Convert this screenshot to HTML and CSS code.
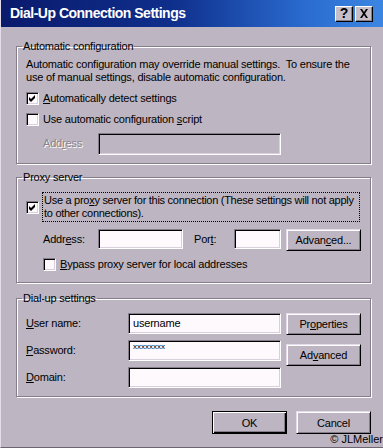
FILE: index.html
```html
<!DOCTYPE html>
<html lang="en">
<head>
  <meta charset="UTF-8">
  <title>Dial-Up Connection Settings</title>
  <link rel="stylesheet" href="styles.css">
</head>
<body>
  <div class="window">
    <div class="titlebar">
      <span class="title">Dial-Up Connection Settings</span>
      <div class="caption-buttons">
        <span class="cap-btn help">?</span>
        <span class="cap-btn close">
          <svg width="10" height="9" viewBox="0 0 10 9"><path d="M1 0 L3 0 L5 3 L7 0 L9 0 L6 4.5 L9 9 L7 9 L5 6 L3 9 L1 9 L4 4.5 Z" fill="#000"/></svg>
        </span>
      </div>
    </div>

    <div class="content">
      <fieldset class="group group-auto">
        <legend>Automatic configuration</legend>
        <p class="note">Automatic configuration may override manual settings.&nbsp; To ensure the<br>use of manual settings, disable automatic configuration.</p>
        <div class="check-row">
          <span class="box"><svg width="9" height="9" viewBox="0 0 9 9"><path d="M1 3 L3 5 L7 1 L7 4 L3 8 L1 6 Z" fill="#000"/></svg></span>
          <span><u>A</u>utomatically detect settings</span>
        </div>
        <div class="check-row">
          <span class="box"></span>
          <span>Use automatic configuration <u>s</u>cript</span>
        </div>
        <div class="field-row indent">
          <span class="label disabled label-addr">Add<u>r</u>ess</span>
          <span class="input input-disabled wide"></span>
        </div>
      </fieldset>

      <fieldset class="group group-proxy">
        <legend>Proxy server</legend>
        <div class="check-row proxy-row">
          <span class="box"><svg width="9" height="9" viewBox="0 0 9 9"><path d="M1 3 L3 5 L7 1 L7 4 L3 8 L1 6 Z" fill="#000"/></svg></span>
          <span class="focus">Use a pro<u>x</u>y server for this connection (These settings will not apply<br>to other connections).</span>
        </div>
        <div class="field-row indent">
          <span class="label label-addr">Addr<u>e</u>ss:</span>
          <span class="input addr"></span>
          <span class="label label-port">Por<u>t</u>:</span>
          <span class="input port"></span>
          <button class="btn">Advan<u>c</u>ed...</button>
        </div>
        <div class="check-row indent bypass">
          <span class="box"></span>
          <span><u>B</u>ypass proxy server for local addresses</span>
        </div>
      </fieldset>

      <fieldset class="group group-dial">
        <legend>Dial-up settings</legend>
        <div class="dial">
          <div class="dial-fields">
            <span class="label"><u>U</u>ser name:</span>
            <span class="input">username</span>
            <span class="label"><u>P</u>assword:</span>
            <span class="input pass">xxxxxxxx</span>
            <span class="label"><u>D</u>omain:</span>
            <span class="input"></span>
          </div>
          <div class="dial-buttons">
            <button class="btn">Pr<u>o</u>perties</button>
            <button class="btn">Ad<u>v</u>anced</button>
          </div>
        </div>
      </fieldset>

      <div class="footer">
        <button class="btn default">OK</button>
        <button class="btn">Cancel</button>
      </div>
    </div>
    <span class="credit">© JLMeller</span>
  </div>
</body>
</html>
```

FILE: styles.css
```css
body {
  margin: 0;
  padding: 0;
  background: #bdb5c1;
  font-family: "Liberation Sans", Arial, sans-serif;
  font-size: 11px;
  line-height: 13px;
  letter-spacing: -0.2px;
  color: #000;
}

.window {
  position: relative;
  width: 383px;
  height: 448px;
  box-sizing: border-box;
  overflow: hidden;
  background: #bdb5c1;
  border-left: 1px solid #e4dce8;
  border-bottom: 1px solid #6c6470;
}

.titlebar {
  height: 27px;
  display: flex;
  align-items: center;
  justify-content: space-between;
  padding: 0 10px 0 9px;
  background: linear-gradient(90deg, #0a1a6c 0%, #0f2f8c 45%, #2a6cd0 80%, #3c86e2 100%);
}

.title {
  color: #fff;
  font-weight: bold;
  font-size: 14px;
  letter-spacing: -0.5px;
}

.caption-buttons {
  display: flex;
  gap: 2px;
}

.cap-btn {
  width: 18px;
  height: 16px;
  box-sizing: border-box;
  display: flex;
  align-items: center;
  justify-content: center;
  background: #c6bec9;
  border: 1px solid;
  border-color: #fff #000 #000 #fff;
  box-shadow: inset -1px -1px 0 #857d89;
  font-weight: bold;
  font-size: 14px;
  letter-spacing: 0;
}

.content {
  padding: 13px 12px 0 15px;
}

.group {
  margin: 0;
  padding: 5px 8px 8px 9px;
  border: 1px solid #857d89;
  box-shadow: 1px 1px 0 #fff, inset 1px 1px 0 #fff;
  min-width: 0;
}

.group legend {
  padding: 0 1px;
  margin-left: -4px;
  line-height: 13px;
}

.group-proxy {
  margin-top: 7px;
  padding-top: 8px;
  padding-bottom: 11px;
}

.group-dial {
  margin-top: 9px;
  padding-top: 8px;
  padding-bottom: 8px;
}

.note {
  margin: 0;
  white-space: nowrap;
}

.check-row {
  display: flex;
  align-items: center;
  gap: 4px;
  margin-top: 8px;
  white-space: nowrap;
}

.box {
  width: 13px;
  height: 13px;
  box-sizing: border-box;
  flex: none;
  display: flex;
  align-items: center;
  justify-content: center;
  background: #fdf9fd;
  border: 1px solid;
  border-color: #857d89 #fff #fff #857d89;
  box-shadow: inset 1px 1px 0 #000, inset -1px -1px 0 #d8d0dc;
}

.proxy-row {
  margin-top: 0;
  gap: 3px;
}

.focus {
  border: 1px dotted #000;
  padding: 1px 1px;
  width: 314px;
  letter-spacing: -0.28px;
}

.field-row {
  display: flex;
  align-items: flex-start;
  margin-top: 7px;
}

.indent {
  padding-left: 17px;
}

.label {
  line-height: 21px;
}

.label-addr {
  width: 55px;
}

.label-port {
  width: 40px;
  margin-left: 11px;
}

.disabled {
  color: #8a828e;
  text-shadow: 1px 1px 0 #fff;
}

.input {
  height: 21px;
  box-sizing: border-box;
  padding: 2px 4px;
  line-height: 15px;
  background: #fdf9fd;
  border: 1px solid;
  border-color: #857d89 #fff #fff #857d89;
  box-shadow: inset 1px 1px 0 #000, inset -1px -1px 0 #d8d0dc;
  white-space: nowrap;
}

.input-disabled {
  background: #bdb5c1;
}

.wide {
  width: 183px;
  height: 22px;
}

.addr {
  width: 85px;
  height: 20px;
}

.port {
  width: 47px;
  height: 20px;
}

.btn {
  width: 75px;
  height: 22px;
  box-sizing: border-box;
  padding: 0;
  font-family: inherit;
  font-size: 11px;
  letter-spacing: inherit;
  color: #000;
  background: #bdb5c1;
  border: 1px solid;
  border-color: #e4dce8 #000 #000 #e4dce8;
  box-shadow: inset 1px 1px 0 #fff, inset -1px -1px 0 #857d89;
}

.field-row .btn {
  margin-left: 5px;
}

.bypass {
  margin-top: 7px;
}

.dial {
  display: flex;
  gap: 5px;
}

.dial-fields {
  display: grid;
  grid-template-columns: 102px 153px;
  row-gap: 6px;
}

.pass {
  font-size: 8px;
  line-height: 10px;
  padding-top: 1px;
  letter-spacing: 0;
}

.dial-buttons {
  display: flex;
  flex-direction: column;
  gap: 9px;
}

.footer {
  display: flex;
  justify-content: flex-end;
  gap: 9px;
  margin-top: 14px;
}

.footer .btn {
  height: 23px;
}

.btn.default {
  border: 1px solid #000;
  box-shadow: inset 1px 1px 0 #fff, inset -1px -1px 0 #000, inset -2px -2px 0 #857d89;
}

.credit {
  position: absolute;
  right: 0;
  bottom: 1px;
  font-size: 11px;
  line-height: 13px;
  letter-spacing: 0;
}
```
